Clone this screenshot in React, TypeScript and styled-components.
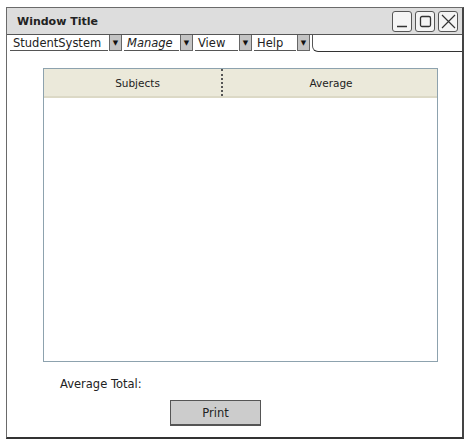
import React from "react";
import styled, { createGlobalStyle } from "styled-components";

const Global = createGlobalStyle`
  html, body { margin: 0; padding: 0; background: #ffffff; }
  body { font-family: "DejaVu Sans", sans-serif; }
`;

const Page = styled.div`
  width: 473px;
  height: 448px;
  padding: 7px 0 0 6px;
  box-sizing: border-box;
`;

const Window = styled.div`
  width: 458px;
  height: 432px;
  box-sizing: border-box;
  border: 1px solid #6a6a6a;
  border-right: 2px solid #444;
  border-bottom: 2px solid #333;
  display: flex;
  flex-direction: column;
  background: #fff;
`;

const TitleBar = styled.div`
  height: 26px;
  background: #dddddd;
  border-bottom: 1px solid #555;
  display: flex;
  align-items: center;
  justify-content: space-between;
  padding: 0 4px 0 10px;
  flex-shrink: 0;
`;

const Title = styled.span`
  font-family: "DejaVu Sans", sans-serif;
  font-weight: bold;
  font-size: 11px;
  color: #222;
`;

const Controls = styled.div`
  display: flex;
  gap: 3px;
  margin-top: 1px;
`;

const CtrlBtn = styled.div`
  width: 20px;
  height: 21px;
  box-sizing: border-box;
  border: 1px solid #555;
  border-radius: 3px;
  background: #f4f4f4;
  display: flex;
  align-items: center;
  justify-content: center;
`;

const MenuBar = styled.div`
  height: 16px;
  display: flex;
  align-items: stretch;
  flex-shrink: 0;
  padding-left: 3px;
`;

const MenuItem = styled.div<{ $w: number; $italic?: boolean }>`
  width: ${(p) => p.$w}px;
  box-sizing: border-box;
  border-bottom: 1px solid #555;
  display: flex;
  align-items: center;
  padding-left: 3px;
  font-family: "DejaVu Sans", sans-serif;
  font-size: 11.5px;
  font-style: ${(p) => (p.$italic ? "italic" : "normal")};
  color: #222;
  white-space: nowrap;
`;

const Arrow = styled.div`
  width: 13px;
  box-sizing: border-box;
  background: #c4c4c4;
  border: 1px solid #666;
  border-top: none;
  display: flex;
  align-items: center;
  justify-content: center;
  margin: 0 2px 0 1px;
  font-size: 7px;
  color: #111;
`;

const MenuFill = styled.div`
  flex: 1;
  border-bottom: 1px solid #333;
  border-left: 1px solid #555;
  border-bottom-left-radius: 6px;
  margin-bottom: -1px;
`;

const Content = styled.div`
  flex: 1;
  padding: 17px 0 0 36px;
  display: flex;
  flex-direction: column;
`;

const Table = styled.div`
  width: 395px;
  height: 294px;
  box-sizing: border-box;
  border: 1px solid #8da2ae;
  display: flex;
  flex-direction: column;
`;

const HeaderRow = styled.div`
  height: 29px;
  background: #ebe9da;
  border-bottom: 2px solid #dcd9c6;
  display: grid;
  grid-template-columns: 179px 1fr;
  box-sizing: border-box;
`;

const HeaderCell = styled.div<{ $divider?: boolean }>`
  display: flex;
  align-items: center;
  justify-content: center;
  padding-left: ${(p) => (p.$divider ? "10px" : "2px")};
  font-family: "DejaVu Sans", sans-serif;
  font-size: 10.5px;
  color: #222;
  border-right: ${(p) => (p.$divider ? "2px dotted #555" : "none")};
`;

const Label = styled.div`
  margin: 15px 0 0 17px;
  font-family: "DejaVu Sans", sans-serif;
  font-size: 11.5px;
  color: #222;
`;

const PrintButton = styled.div`
  margin: 9px 0 0 127px;
  width: 91px;
  height: 26px;
  box-sizing: border-box;
  background: #cccccc;
  border: 1px solid #555;
  border-bottom-width: 2px;
  display: flex;
  align-items: center;
  justify-content: center;
  font-family: "DejaVu Sans", sans-serif;
  font-size: 11.5px;
  color: #222;
`;

export default function App() {
  return (
    <>
      <Global />
      <Page>
        <Window>
          <TitleBar>
            <Title>Window Title</Title>
            <Controls>
              <CtrlBtn>
                <svg width="12" height="13" viewBox="0 0 12 13">
                  <line x1="1" y1="11.5" x2="11" y2="11.5" stroke="#333" strokeWidth="1.5" />
                </svg>
              </CtrlBtn>
              <CtrlBtn>
                <svg width="13" height="13" viewBox="0 0 13 13">
                  <rect x="1.5" y="1.5" width="10" height="10" rx="1.5" fill="none" stroke="#333" strokeWidth="1.3" />
                </svg>
              </CtrlBtn>
              <CtrlBtn>
                <svg width="15" height="15" viewBox="0 0 15 15">
                  <path d="M1 1 L14 14 M14 1 L1 14" stroke="#333" strokeWidth="1.2" />
                </svg>
              </CtrlBtn>
            </Controls>
          </TitleBar>
          <MenuBar>
            <MenuItem $w={98}>StudentSystem</MenuItem>
            <Arrow>▼</Arrow>
            <MenuItem $w={55} $italic>Manage</MenuItem>
            <Arrow>▼</Arrow>
            <MenuItem $w={43}>View</MenuItem>
            <Arrow>▼</Arrow>
            <MenuItem $w={42}>Help</MenuItem>
            <Arrow>▼</Arrow>
            <MenuFill />
          </MenuBar>
          <Content>
            <Table>
              <HeaderRow>
                <HeaderCell $divider>Subjects</HeaderCell>
                <HeaderCell>Average</HeaderCell>
              </HeaderRow>
            </Table>
            <Label>Average Total:</Label>
            <PrintButton>Print</PrintButton>
          </Content>
        </Window>
      </Page>
    </>
  );
}
